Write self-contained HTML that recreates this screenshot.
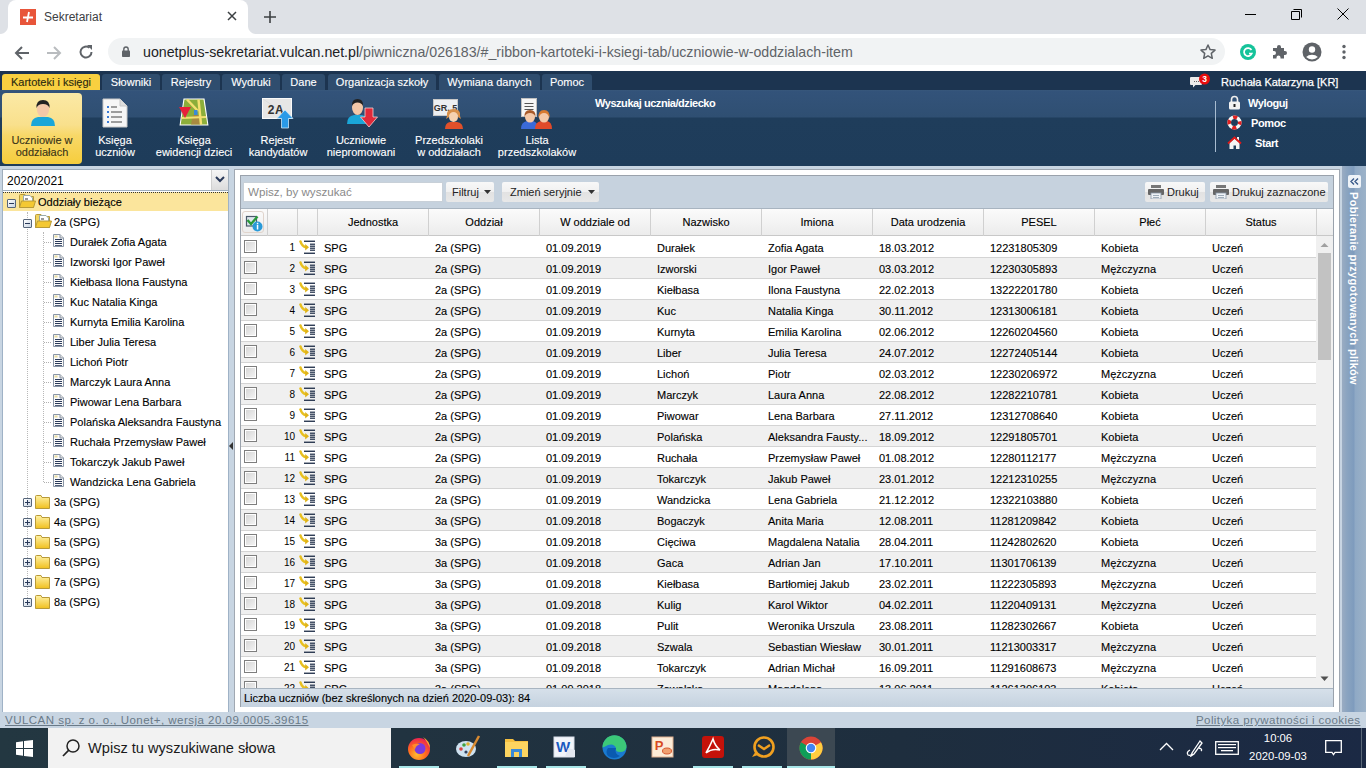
<!DOCTYPE html>
<html><head><meta charset="utf-8"><title>Sekretariat</title>
<style>
*{margin:0;padding:0;box-sizing:border-box}
html,body{width:1366px;height:768px;overflow:hidden;background:#fff;font-family:"Liberation Sans",sans-serif;position:relative}
.abs{position:absolute}
/* chrome */
#tabstrip{position:absolute;left:0;top:0;width:1366px;height:34px;background:#dee1e6}
#tab{position:absolute;left:8px;top:0;width:240px;height:34px;background:#fff;border-radius:8px 8px 0 0}
#tab:before,#tab:after{content:"";position:absolute;bottom:0;width:8px;height:8px;background:radial-gradient(circle at 0 0,transparent 8px,#fff 8px)}
#tab:before{left:-8px;background:radial-gradient(circle at 0 0,#dee1e6 7.5px,#fff 8.5px)}
#tab:after{right:-8px;background:radial-gradient(circle at 100% 0,#dee1e6 7.5px,#fff 8.5px)}
#toolbar{position:absolute;left:0;top:34px;width:1366px;height:37px;background:#fff}
#omni{position:absolute;left:108px;top:38px;width:1117px;height:27px;background:#f1f3f4;border-radius:13.5px}
#url{position:absolute;left:142px;top:44px;font-size:14.2px;color:#5f6368;white-space:nowrap;line-height:16px}
#url b{font-weight:normal;color:#202124}
/* app */
#appbar{position:absolute;left:0;top:71px;width:1366px;height:19px;background:#1c3450}
.atab{position:absolute;top:3px;height:16px;background:#2f4d6e;border-radius:3px 3px 0 0;color:#fff;-webkit-text-stroke:0.12px #fff;font-size:11px;line-height:16px;text-align:center;white-space:nowrap}
.atab.sel{background:#f8d040;color:#2a2a10;-webkit-text-stroke:0.12px #2a2a10}
#ribbon{position:absolute;left:0;top:90px;width:1366px;height:76px;background:linear-gradient(#3a5a7c 0,#33537a 1px,#2f4f72 27px,#1f3d5b 28px,#1e3c5a 75px)}
.rbtn{position:absolute;top:3px;height:71px;text-align:center;color:#fff;-webkit-text-stroke:0.12px #fff;font-size:11px;line-height:12px;white-space:nowrap}
.rbtn .lbl{position:absolute;left:0;right:0;top:41px}
.rbtn.sel{background:linear-gradient(#fbe9a6,#f9e08c 45%,#f8d868 60%,#f6cd3c);border-radius:4px;color:#3a3418;-webkit-text-stroke:0.12px #3a3418}
#content{position:absolute;left:0;top:166px;width:1366px;height:562px;background:#c8d5e2}
#leftp{position:absolute;left:2px;top:169px;width:227px;height:544px;background:#fff;border:1px solid #9fb2c6}
#yearsel{position:absolute;left:2px;top:169px;width:227px;height:22px;background:#fff;border:1px solid #a0aebc;font-size:12px;line-height:22px;padding-left:4px;color:#000}
#yearbtn{position:absolute;left:211px;top:170px;width:17px;height:20px;background:linear-gradient(#f6f6f6,#dcdcdc);border-left:1px solid #d0d0d0}
.trow{position:absolute;height:20px;font-size:11px;line-height:20px;color:#000;-webkit-text-stroke:0.12px #000;white-space:nowrap}
.tchild{position:absolute;left:40px;height:20px;width:180px;font-size:11px;line-height:20px;color:#000;-webkit-text-stroke:0.12px #000;white-space:nowrap}
.tchild .tlabel{position:absolute;left:30px;top:0}
.tchild .hdot{position:absolute;left:4px;top:10px;width:7px;border-top:1px dotted #b0b0b0}
.tfold{position:absolute;left:22px;height:20px;width:180px;font-size:11px;line-height:20px;color:#000;-webkit-text-stroke:0.12px #000;white-space:nowrap}
.tfold .tlabel2{position:absolute;left:32px;top:0}
.plus{position:absolute;left:1px;top:6px;width:9px;height:9px;border:1px solid #56657a;border-radius:1px;background:linear-gradient(135deg,#fff,#c8d4e2)}
.plus:before{content:"";position:absolute;left:1px;top:3px;width:5px;height:1px;background:#2a3a5a}
.plus:after{content:"";position:absolute;left:3px;top:1px;width:1px;height:5px;background:#2a3a5a}
.minus{position:absolute;width:9px;height:9px;border:1px solid #56657a;border-radius:1px;background:linear-gradient(135deg,#fff,#c8d4e2)}
.minus:before{content:"";position:absolute;left:1px;top:3px;width:5px;height:1px;background:#2a3a5a}
/* main panel */
#mainp{position:absolute;left:234px;top:169px;width:106px;height:544px}
#mainouter{position:absolute;left:234px;top:169px;width:1106px;height:544px;background:#fff;border:1px solid #a0a8b2}
#gridbox{position:absolute;left:240px;top:175px;width:1094px;height:532px;background:#c6d2de;border:1px solid #9aa2ac}
#search{position:absolute;left:243px;top:182px;width:200px;height:20px;background:#fff;border:1px solid #c8d0d8;font-size:11.6px;line-height:18px;color:#8a8a8a;padding-left:4px}
.tbtn{position:absolute;top:182px;height:20px;background:linear-gradient(#f8f8f8 0,#f0f0f0 50%,#e2e2e2 51%,#e8e8e8 100%);border-radius:2px;font-size:11px;line-height:21px;color:#222;white-space:nowrap}
#gridhead{position:absolute;left:241px;top:208px;width:1092px;height:28px;background:linear-gradient(#fbfbfb,#ececec);border-top:1px solid #a8b4c0;border-bottom:1px solid #c8c8c8}
.hcell{position:absolute;top:0;height:27px;border-right:1px solid #d0d0d0;font-size:11px;line-height:26px;text-align:center;color:#000;-webkit-text-stroke:0.12px #000}
#gridbody{position:absolute;left:241px;top:236px;width:1092px;height:452px;background:#fff;overflow:hidden}
.row{position:absolute;left:0;width:1075px;height:21px;border-bottom:1px solid #d4d4d4;font-size:11px;line-height:20px;color:#000;-webkit-text-stroke:0.12px #000}
.row .cell{position:absolute;top:1px;white-space:nowrap}
.vsep2{position:absolute;left:56px;top:0;width:1px;height:20px;background:#f2f2f2}
.vsep{display:none}
.row .cb{position:absolute;left:3px;top:3px;width:13px;height:13px;border:1px solid #7e7e7e;box-shadow:inset 0 0 0 1px #fff;background:linear-gradient(135deg,#d4d4d4,#f6f6f6)}
.row .num{position:absolute;left:26px;width:28px;text-align:right;top:1px;font-size:10px;-webkit-text-stroke:0}
.row .ricon{position:absolute;left:58px;top:3px;width:17px;height:15px;line-height:0}
#gridfoot{position:absolute;left:241px;top:688px;width:1092px;height:19px;background:linear-gradient(#d6e0ea,#c5d2df);border-top:1px solid #a8b4c0;font-size:11px;line-height:18px;color:#000;-webkit-text-stroke:0.12px #000;padding-left:3px}
#sidebar{position:absolute;left:1342px;top:166px;width:24px;height:546px;background:linear-gradient(90deg,#9aacc2 0,#8aa4c0 5px,#7e9bbd 12px,#8fa9c5 13px,#9cb2c8 24px)}
#footer{position:absolute;left:0;top:712px;width:1366px;height:16px;background:#c8d5e2;font-size:11.5px;line-height:16px;color:#6a7a88}
#footer span{text-decoration:underline;position:absolute;top:0}
#taskbar{position:absolute;left:0;top:728px;width:1366px;height:40px;background:linear-gradient(90deg,#233741 0,#213340 400px,#1e2e3e 900px,#1b2944 1366px)}
#tsearch{position:absolute;left:48px;top:728px;width:343px;height:40px;background:#f2f2f2;font-size:14.6px;color:#1a1a1a;line-height:40px;padding-left:40px}

.doc{position:absolute;left:13px;top:2px;width:11px;height:13px;line-height:0}
.folder{position:absolute;left:13px;top:3px;width:16px;height:14px;line-height:0}

</style></head><body>
<!-- Chrome -->
<div id="tabstrip"></div>
<div id="tab"></div>
<svg class="abs" style="left:20px;top:9px" width="16" height="16" viewBox="0 0 16 16"><rect width="16" height="16" fill="#e8553a"/><path d="M3 8.5 H13 M9 3 L7 13" stroke="#fff" stroke-width="1.8"/></svg>
<div class="abs" style="left:44px;top:9px;font-size:12px;line-height:16px;color:#3c4043">Sekretariat</div>
<svg class="abs" style="left:226px;top:10px" width="12" height="12" viewBox="0 0 12 12"><path d="M2 2 L10 10 M10 2 L2 10" stroke="#3c4043" stroke-width="1.5"/></svg>
<svg class="abs" style="left:262px;top:9px" width="16" height="16" viewBox="0 0 16 16"><path d="M8 2 V14 M2 8 H14" stroke="#3c4043" stroke-width="1.6"/></svg>
<svg class="abs" style="left:1245px;top:7px" width="12" height="14" viewBox="0 0 12 14"><path d="M0 7.5 H11" stroke="#000" stroke-width="1"/></svg>
<svg class="abs" style="left:1290px;top:8px" width="14" height="14" viewBox="0 0 14 14"><path d="M3.5 1.5 H11.5 V9.5 M1.5 3.5 H9.5 V11.5 H1.5 Z" fill="none" stroke="#000" stroke-width="1"/></svg>
<svg class="abs" style="left:1337px;top:8px" width="12" height="12" viewBox="0 0 12 12"><path d="M0.5 0.5 L11.5 11.5 M11.5 0.5 L0.5 11.5" stroke="#000" stroke-width="1"/></svg>
<div id="toolbar"></div>
<svg class="abs" style="left:12px;top:43px" width="20" height="20" viewBox="0 0 20 20"><path d="M17 10 H4 M10 4 L4 10 L10 16" fill="none" stroke="#5f6368" stroke-width="2"/></svg>
<svg class="abs" style="left:44px;top:43px" width="20" height="20" viewBox="0 0 20 20"><path d="M3 10 H16 M10 4 L16 10 L10 16" fill="none" stroke="#b9bcbf" stroke-width="2"/></svg>
<svg class="abs" style="left:76px;top:42px" width="20" height="20" viewBox="0 0 20 20"><path d="M15.5 10 A5.5 5.5 0 1 1 13.5 5.8" fill="none" stroke="#5f6368" stroke-width="2"/><path d="M11 3 H16 V8 Z" fill="#5f6368"/></svg>
<div id="omni"></div>
<svg class="abs" style="left:122px;top:46px" width="8" height="11" viewBox="0 0 8 11"><rect x="0" y="4.5" width="8" height="6.5" rx="0.8" fill="#5f6368"/><path d="M1.8 5 V3.2 A2.2 2.2 0 0 1 6.2 3.2 V5" fill="none" stroke="#5f6368" stroke-width="1.4"/></svg>
<div id="url" style="left:143px;top:44px"><b>uonetplus-sekretariat.vulcan.net.pl</b>/piwniczna/026183/#_ribbon-kartoteki-i-ksiegi-tab/uczniowie-w-oddzialach-item</div>
<svg class="abs" style="left:1199px;top:43px" width="18" height="18" viewBox="0 0 18 18"><path d="M9 2 L11.1 6.6 L16 7.1 L12.3 10.4 L13.3 15.3 L9 12.8 L4.7 15.3 L5.7 10.4 L2 7.1 L6.9 6.6 Z" fill="none" stroke="#5f6368" stroke-width="1.5" stroke-linejoin="round"/></svg>
<svg class="abs" style="left:1239px;top:43px" width="18" height="18" viewBox="0 0 18 18"><circle cx="9" cy="9" r="8" fill="#15c39a"/><path d="M12.5 7 A4 4 0 1 0 12.8 10.5 L10 10.5" fill="none" stroke="#fff" stroke-width="1.7"/></svg>
<svg class="abs" style="left:1271px;top:43px" width="18" height="18" viewBox="0 0 18 18"><path d="M2 5 H6 V4 A2 2 0 0 1 10 4 V5 H13 V8 H14 A2 2 0 0 1 14 12 H13 V15.5 H9.5 V14.5 A2 2 0 0 0 5.5 14.5 V15.5 H2 V12 H3 A2 2 0 0 0 3 8 H2 Z" fill="#5f6368"/></svg>
<svg class="abs" style="left:1302px;top:42px" width="20" height="20" viewBox="0 0 20 20"><circle cx="10" cy="10" r="9.5" fill="#5f6368"/><circle cx="10" cy="7.5" r="3.2" fill="#fff"/><path d="M4.2 15 A7 5 0 0 1 15.8 15 A8 8 0 0 1 4.2 15Z" fill="#fff"/></svg>
<svg class="abs" style="left:1341px;top:43px" width="6" height="18" viewBox="0 0 6 18"><circle cx="3" cy="3.5" r="1.7" fill="#5f6368"/><circle cx="3" cy="9" r="1.7" fill="#5f6368"/><circle cx="3" cy="14.5" r="1.7" fill="#5f6368"/></svg>

<!-- App bar -->
<div id="appbar"></div>
<div class="atab sel abs" style="left:2px;top:74px;width:98px">Kartoteki i księgi</div>
<div class="atab abs" style="left:102px;top:74px;width:58px">Słowniki</div>
<div class="atab abs" style="left:162px;top:74px;width:58px">Rejestry</div>
<div class="atab abs" style="left:222px;top:74px;width:58px">Wydruki</div>
<div class="atab abs" style="left:282px;top:74px;width:43px">Dane</div>
<div class="atab abs" style="left:328px;top:74px;width:108px">Organizacja szkoły</div>
<div class="atab abs" style="left:439px;top:74px;width:101px">Wymiana danych</div>
<div class="atab abs" style="left:542px;top:74px;width:50px">Pomoc</div>
<svg class="abs" style="left:1188px;top:72px" width="24" height="17" viewBox="0 0 24 17"><path d="M3 5 H13 A1 1 0 0 1 14 6 V12 A1 1 0 0 1 13 13 H7.5 L5 15.5 V13 H3 A1 1 0 0 1 2 12 V6 A1 1 0 0 1 3 5Z" fill="#ececec"/><g fill="#666"><rect x="6" y="9" width="1" height="1"/><rect x="8" y="9" width="1" height="1"/><rect x="10" y="9" width="1" height="1"/></g><circle cx="16.5" cy="7" r="5.5" fill="#e80c0c"/><text x="16.5" y="10" font-size="8.5" font-family="Liberation Sans" font-weight="bold" fill="#fff" text-anchor="middle">3</text></svg>
<div class="abs" style="left:1221px;top:75px;font-size:11px;line-height:14px;color:#fff;-webkit-text-stroke:0.25px #fff;white-space:nowrap">Ruchała Katarzyna [KR]</div>

<!-- Ribbon -->
<div id="ribbon"></div>
<div class="rbtn sel abs" style="left:2px;top:93px;width:80px">
 <svg class="abs" style="left:28px;top:6px" width="26" height="28" viewBox="0 0 26 28"><path d="M1 27 Q1 19 8 18 L18 18 Q25 19 25 27 Z" fill="#1aa6d8"/><ellipse cx="13" cy="10" rx="6.2" ry="8" fill="#f4c8a8"/><path d="M6.5 9 Q6 1 13 1 Q20 1 19.5 9 Q18 5 13 5 Q8 5 6.5 9Z" fill="#222"/></svg>
 <div class="lbl" style="top:41px">Uczniowie w<br>oddziałach</div></div>
<div class="rbtn abs" style="left:86px;top:93px;width:58px">
 <svg class="abs" style="left:16px;top:5px" width="26" height="30" viewBox="0 0 26 30"><path d="M1 1 H18 L25 8 V29 H1 Z" fill="#f6f6f6" stroke="#c8c8c8"/><path d="M18 1 V8 H25" fill="#ddd" stroke="#c8c8c8"/><g fill="#3a7bd5"><rect x="5" y="8" width="2" height="2"/><rect x="5" y="13" width="2" height="2"/><rect x="5" y="18" width="2" height="2"/><rect x="5" y="23" width="2" height="2"/></g><g fill="#444"><rect x="9" y="8.5" width="6" height="1"/><rect x="9" y="13.5" width="11" height="1"/><rect x="9" y="18.5" width="11" height="1"/><rect x="9" y="23.5" width="11" height="1"/></g></svg>
 <div class="lbl" style="top:41px">Księga<br>uczniów</div></div>
<div class="rbtn abs" style="left:152px;top:93px;width:84px">
 <svg class="abs" style="left:27px;top:5px" width="30" height="28" viewBox="0 0 30 28"><path d="M4.5 0.5 H25.5 L29.5 27.5 H0.5 Z" fill="#fff"/><path d="M5.5 1.5 H24.5 L28.3 26.5 H1.7 Z" fill="#8cae3a"/><path d="M14 17 L20 17 L21 26.5 L12 26.5Z" fill="#a88a40"/><path d="M8 1.5 L19 13" stroke="#f4e070" stroke-width="2.5"/><path d="M19.5 1.5 L22 26.5" stroke="#f4e070" stroke-width="2.5"/><path d="M2.5 20 L27 19" stroke="#f4e070" stroke-width="2"/><rect x="15" y="12" width="3.5" height="5" fill="#3a8ad8"/><path d="M0 9 L12 9 L6 20Z" fill="#e8203a"/></svg>
 <div class="lbl" style="top:41px">Księga<br>ewidencji dzieci</div></div>
<div class="rbtn abs" style="left:244px;top:93px;width:68px">
 <svg class="abs" style="left:18px;top:5px" width="32" height="31" viewBox="0 0 32 31"><rect x="0.5" y="0.5" width="29" height="20" fill="#e6e6e6" stroke="#fafafa"/><path d="M1 1 L29 20" stroke="#d0d0d0" stroke-width="0.5"/><text x="14" y="15.5" font-size="12" font-weight="bold" font-family="Liberation Sans" fill="#333" text-anchor="middle" letter-spacing="0.5">2A</text><path d="M23 12 L31 20.5 H26.5 V30 H19.5 V20.5 H15 Z" fill="#2a9ae8" stroke="#c8e4f8" stroke-width="0.8"/></svg>
 <div class="lbl" style="top:41px">Rejestr<br>kandydatów</div></div>
<div class="rbtn abs" style="left:320px;top:93px;width:82px">
 <svg class="abs" style="left:26px;top:5px" width="33" height="31" viewBox="0 0 33 31"><path d="M1 26 Q1 18 8 17 L16 17 Q22 18 22 26 Z" fill="#1aa6d8"/><ellipse cx="11.5" cy="9.5" rx="5.5" ry="7.5" fill="#f4c8a8"/><path d="M6 8 Q5.5 1 11.5 1 Q17.5 1 17 8 Q15.5 4.5 11.5 4.5 Q7.5 4.5 6 8Z" fill="#222"/><path d="M19 10 H27 V19 H31.5 L23 29 L14.5 19 H19 Z" fill="#e02a3a" stroke="#f4d0d0" stroke-width="0.8"/></svg>
 <div class="lbl" style="top:41px">Uczniowie<br>niepromowani</div></div>
<div class="rbtn abs" style="left:410px;top:93px;width:78px">
 <svg class="abs" style="left:23px;top:6px" width="34" height="31" viewBox="0 0 34 31"><rect x="0.5" y="0.5" width="24" height="16" fill="#eceff2" stroke="#c8c8c8"/><text x="12.5" y="12" font-size="9" font-weight="bold" font-family="Liberation Sans" fill="#333" text-anchor="middle">GR. 5</text><path d="M12 30 Q12 24 17 23 H24 Q30 24 30 30Z" fill="#e0502a"/><path d="M14 17 Q13 10 20.5 10 Q28 10 27 17 L28 20 L25 18 Q25 14 20.5 14 Q16 14 16 18 L13 20Z" fill="#d8904a"/><ellipse cx="20.5" cy="18" rx="4.5" ry="5" fill="#f6d2b0"/></svg>
 <div class="lbl" style="top:41px">Przedszkolaki<br>w oddziałach</div></div>
<div class="rbtn abs" style="left:496px;top:93px;width:82px">
 <svg class="abs" style="left:24px;top:5px" width="34" height="32" viewBox="0 0 34 32"><rect x="1.5" y="0.5" width="15" height="18" fill="#f6f6f6" stroke="#c0c0c0"/><g fill="#555"><rect x="4.5" y="5" width="9" height="1"/><rect x="4.5" y="8" width="9" height="1"/><rect x="4.5" y="11" width="9" height="1"/></g><path d="M1 31 Q1 24 7 23 H13 Q18 24 18 31Z" fill="#3a6ad8"/><ellipse cx="10" cy="19" rx="5" ry="5.5" fill="#f4c8a8"/><path d="M4.5 19 Q4 12 10 12 Q16 12 15.5 19 Q14 15 10 15 Q6 15 4.5 19Z" fill="#a85a2a"/><path d="M15 31 Q15 24 21 23 H27 Q32 24 32 31Z" fill="#e04a2a"/><ellipse cx="24" cy="19" rx="5" ry="5.5" fill="#f4c8a8"/><path d="M18.5 20 Q18 12 24 12 Q30 12 29.5 20 Q28 15 24 15 Q20 15 18.5 20Z" fill="#d87a30"/></svg>
 <div class="lbl" style="top:41px">Lista<br>przedszkolaków</div></div>
<div class="abs" style="left:595px;top:97px;font-size:11px;line-height:13px;color:#fff;font-weight:bold;letter-spacing:-0.45px;white-space:nowrap">Wyszukaj ucznia/dziecko</div>
<div class="abs" style="left:1215px;top:101px;width:1px;height:51px;background:#a8bcd0"></div>
<svg class="abs" style="left:1228px;top:95px" width="13" height="15" viewBox="0 0 13 15"><path d="M3.5 7 V4.5 A3 3 0 0 1 9.5 4.5 V7" fill="none" stroke="#eee" stroke-width="1.6"/><rect x="1" y="6.5" width="11" height="8" rx="1.5" fill="#f2f2f2"/><rect x="5.5" y="9" width="2" height="3" fill="#222"/></svg>
<div class="abs" style="left:1248px;top:96px;font-size:11px;line-height:14px;color:#fff;font-weight:bold;letter-spacing:-0.4px">Wyloguj</div>
<svg class="abs" style="left:1227px;top:115px" width="15" height="15" viewBox="0 0 15 15"><circle cx="7.5" cy="7.5" r="5.3" fill="none" stroke="#f6f6f6" stroke-width="3.6"/><circle cx="7.5" cy="7.5" r="5.3" fill="none" stroke="#e02020" stroke-width="3.6" stroke-dasharray="4.16 4.16" stroke-dashoffset="2.08"/></svg>
<div class="abs" style="left:1251px;top:116px;font-size:11px;line-height:14px;color:#fff;font-weight:bold;letter-spacing:-0.4px">Pomoc</div>
<svg class="abs" style="left:1227px;top:135px" width="15" height="15" viewBox="0 0 15 15"><path d="M2.5 8 L7.5 3.5 L12.5 8 V14 H9 V10.5 H6.5 V14 H2.5Z" fill="#f4f4f4"/><rect x="10" y="2" width="2" height="4" fill="#f4f4f4"/><path d="M1 8.5 L7.5 2.5 L14 8.5" fill="none" stroke="#e01818" stroke-width="1.8"/></svg>
<div class="abs" style="left:1255px;top:136px;font-size:11px;line-height:14px;color:#fff;font-weight:bold;letter-spacing:-0.4px">Start</div>

<!-- Content -->
<div id="content"></div>
<div id="leftp"></div>
<div id="yearsel">2020/2021</div>
<div id="yearbtn"><svg class="abs" style="left:3px;top:6px" width="10" height="7" viewBox="0 0 10 7"><path d="M1 1 L5 5 L9 1" fill="none" stroke="#2a3a5a" stroke-width="2"/></svg></div>
<div class="abs" style="left:3px;top:192px;width:225px;height:19px;background:#fbe59c;border-top:1px dotted #333"></div>
<div class="minus" style="left:7px;top:199px"></div>
<div class="folder" style="left:19px;top:194px"><svg width="17" height="14" viewBox="0 0 17 14"><path d="M0.5 1.5 Q0.5 0.5 1.5 0.5 H6 L7 2.5 H14.5 V13.5 H0.5Z" fill="#f2d560" stroke="#b89a38"/><path d="M4.5 1.5 H11 L13.5 4 V8 H4.5Z" fill="#fff" stroke="#9aa"/><rect x="6" y="4.5" width="3" height="1" fill="#333"/><path d="M0.5 13.5 L2.5 7 H16.5 L14.5 13.5Z" fill="#f4c832" stroke="#b89a38"/></svg></div>
<div class="trow" style="left:38px;top:192px">Oddziały bieżące</div>
<div class="abs" style="left:27px;top:212px;height:390px;border-left:1px dotted #b8b8b8"></div>
<div class="abs" style="left:43px;top:232px;height:250px;border-left:1px dotted #b8b8b8"></div>
<div class="minus" style="left:23px;top:219px"></div>
<div class="folder" style="left:35px;top:214px"><svg width="17" height="14" viewBox="0 0 17 14"><path d="M0.5 1.5 Q0.5 0.5 1.5 0.5 H6 L7 2.5 H14.5 V13.5 H0.5Z" fill="#f2d560" stroke="#b89a38"/><path d="M4.5 1.5 H11 L13.5 4 V8 H4.5Z" fill="#fff" stroke="#9aa"/><rect x="6" y="4.5" width="3" height="1" fill="#333"/><path d="M0.5 13.5 L2.5 7 H16.5 L14.5 13.5Z" fill="#f4c832" stroke="#b89a38"/></svg></div>
<div class="trow" style="left:54px;top:212px">2a (SPG)</div>
<div class="tchild" style="top:232px"><span class="hdot"></span><span class="doc"><svg width="11" height="13" viewBox="0 0 11 13"><path d="M0.5 0.5 H7 L10.5 4 V12.5 H0.5Z" fill="#fafafa" stroke="#8a96a6"/><path d="M7 0.5 V4 H10.5" fill="#ddd" stroke="#8a96a6"/><rect x="1.5" y="1.5" width="3" height="2" fill="#e8dca0"/><g fill="#2a3a5a"><rect x="2" y="5" width="7" height="1"/><rect x="2" y="7" width="7" height="1"/><rect x="2" y="9" width="7" height="1"/><rect x="2" y="11" width="7" height="0.8"/></g></svg></span><span class="tlabel">Durałek Zofia Agata</span></div>
<div class="tchild" style="top:252px"><span class="hdot"></span><span class="doc"><svg width="11" height="13" viewBox="0 0 11 13"><path d="M0.5 0.5 H7 L10.5 4 V12.5 H0.5Z" fill="#fafafa" stroke="#8a96a6"/><path d="M7 0.5 V4 H10.5" fill="#ddd" stroke="#8a96a6"/><rect x="1.5" y="1.5" width="3" height="2" fill="#e8dca0"/><g fill="#2a3a5a"><rect x="2" y="5" width="7" height="1"/><rect x="2" y="7" width="7" height="1"/><rect x="2" y="9" width="7" height="1"/><rect x="2" y="11" width="7" height="0.8"/></g></svg></span><span class="tlabel">Izworski Igor Paweł</span></div>
<div class="tchild" style="top:272px"><span class="hdot"></span><span class="doc"><svg width="11" height="13" viewBox="0 0 11 13"><path d="M0.5 0.5 H7 L10.5 4 V12.5 H0.5Z" fill="#fafafa" stroke="#8a96a6"/><path d="M7 0.5 V4 H10.5" fill="#ddd" stroke="#8a96a6"/><rect x="1.5" y="1.5" width="3" height="2" fill="#e8dca0"/><g fill="#2a3a5a"><rect x="2" y="5" width="7" height="1"/><rect x="2" y="7" width="7" height="1"/><rect x="2" y="9" width="7" height="1"/><rect x="2" y="11" width="7" height="0.8"/></g></svg></span><span class="tlabel">Kiełbasa Ilona Faustyna</span></div>
<div class="tchild" style="top:292px"><span class="hdot"></span><span class="doc"><svg width="11" height="13" viewBox="0 0 11 13"><path d="M0.5 0.5 H7 L10.5 4 V12.5 H0.5Z" fill="#fafafa" stroke="#8a96a6"/><path d="M7 0.5 V4 H10.5" fill="#ddd" stroke="#8a96a6"/><rect x="1.5" y="1.5" width="3" height="2" fill="#e8dca0"/><g fill="#2a3a5a"><rect x="2" y="5" width="7" height="1"/><rect x="2" y="7" width="7" height="1"/><rect x="2" y="9" width="7" height="1"/><rect x="2" y="11" width="7" height="0.8"/></g></svg></span><span class="tlabel">Kuc Natalia Kinga</span></div>
<div class="tchild" style="top:312px"><span class="hdot"></span><span class="doc"><svg width="11" height="13" viewBox="0 0 11 13"><path d="M0.5 0.5 H7 L10.5 4 V12.5 H0.5Z" fill="#fafafa" stroke="#8a96a6"/><path d="M7 0.5 V4 H10.5" fill="#ddd" stroke="#8a96a6"/><rect x="1.5" y="1.5" width="3" height="2" fill="#e8dca0"/><g fill="#2a3a5a"><rect x="2" y="5" width="7" height="1"/><rect x="2" y="7" width="7" height="1"/><rect x="2" y="9" width="7" height="1"/><rect x="2" y="11" width="7" height="0.8"/></g></svg></span><span class="tlabel">Kurnyta Emilia Karolina</span></div>
<div class="tchild" style="top:332px"><span class="hdot"></span><span class="doc"><svg width="11" height="13" viewBox="0 0 11 13"><path d="M0.5 0.5 H7 L10.5 4 V12.5 H0.5Z" fill="#fafafa" stroke="#8a96a6"/><path d="M7 0.5 V4 H10.5" fill="#ddd" stroke="#8a96a6"/><rect x="1.5" y="1.5" width="3" height="2" fill="#e8dca0"/><g fill="#2a3a5a"><rect x="2" y="5" width="7" height="1"/><rect x="2" y="7" width="7" height="1"/><rect x="2" y="9" width="7" height="1"/><rect x="2" y="11" width="7" height="0.8"/></g></svg></span><span class="tlabel">Liber Julia Teresa</span></div>
<div class="tchild" style="top:352px"><span class="hdot"></span><span class="doc"><svg width="11" height="13" viewBox="0 0 11 13"><path d="M0.5 0.5 H7 L10.5 4 V12.5 H0.5Z" fill="#fafafa" stroke="#8a96a6"/><path d="M7 0.5 V4 H10.5" fill="#ddd" stroke="#8a96a6"/><rect x="1.5" y="1.5" width="3" height="2" fill="#e8dca0"/><g fill="#2a3a5a"><rect x="2" y="5" width="7" height="1"/><rect x="2" y="7" width="7" height="1"/><rect x="2" y="9" width="7" height="1"/><rect x="2" y="11" width="7" height="0.8"/></g></svg></span><span class="tlabel">Lichoń Piotr</span></div>
<div class="tchild" style="top:372px"><span class="hdot"></span><span class="doc"><svg width="11" height="13" viewBox="0 0 11 13"><path d="M0.5 0.5 H7 L10.5 4 V12.5 H0.5Z" fill="#fafafa" stroke="#8a96a6"/><path d="M7 0.5 V4 H10.5" fill="#ddd" stroke="#8a96a6"/><rect x="1.5" y="1.5" width="3" height="2" fill="#e8dca0"/><g fill="#2a3a5a"><rect x="2" y="5" width="7" height="1"/><rect x="2" y="7" width="7" height="1"/><rect x="2" y="9" width="7" height="1"/><rect x="2" y="11" width="7" height="0.8"/></g></svg></span><span class="tlabel">Marczyk Laura Anna</span></div>
<div class="tchild" style="top:392px"><span class="hdot"></span><span class="doc"><svg width="11" height="13" viewBox="0 0 11 13"><path d="M0.5 0.5 H7 L10.5 4 V12.5 H0.5Z" fill="#fafafa" stroke="#8a96a6"/><path d="M7 0.5 V4 H10.5" fill="#ddd" stroke="#8a96a6"/><rect x="1.5" y="1.5" width="3" height="2" fill="#e8dca0"/><g fill="#2a3a5a"><rect x="2" y="5" width="7" height="1"/><rect x="2" y="7" width="7" height="1"/><rect x="2" y="9" width="7" height="1"/><rect x="2" y="11" width="7" height="0.8"/></g></svg></span><span class="tlabel">Piwowar Lena Barbara</span></div>
<div class="tchild" style="top:412px"><span class="hdot"></span><span class="doc"><svg width="11" height="13" viewBox="0 0 11 13"><path d="M0.5 0.5 H7 L10.5 4 V12.5 H0.5Z" fill="#fafafa" stroke="#8a96a6"/><path d="M7 0.5 V4 H10.5" fill="#ddd" stroke="#8a96a6"/><rect x="1.5" y="1.5" width="3" height="2" fill="#e8dca0"/><g fill="#2a3a5a"><rect x="2" y="5" width="7" height="1"/><rect x="2" y="7" width="7" height="1"/><rect x="2" y="9" width="7" height="1"/><rect x="2" y="11" width="7" height="0.8"/></g></svg></span><span class="tlabel">Polańska Aleksandra Faustyna</span></div>
<div class="tchild" style="top:432px"><span class="hdot"></span><span class="doc"><svg width="11" height="13" viewBox="0 0 11 13"><path d="M0.5 0.5 H7 L10.5 4 V12.5 H0.5Z" fill="#fafafa" stroke="#8a96a6"/><path d="M7 0.5 V4 H10.5" fill="#ddd" stroke="#8a96a6"/><rect x="1.5" y="1.5" width="3" height="2" fill="#e8dca0"/><g fill="#2a3a5a"><rect x="2" y="5" width="7" height="1"/><rect x="2" y="7" width="7" height="1"/><rect x="2" y="9" width="7" height="1"/><rect x="2" y="11" width="7" height="0.8"/></g></svg></span><span class="tlabel">Ruchała Przemysław Paweł</span></div>
<div class="tchild" style="top:452px"><span class="hdot"></span><span class="doc"><svg width="11" height="13" viewBox="0 0 11 13"><path d="M0.5 0.5 H7 L10.5 4 V12.5 H0.5Z" fill="#fafafa" stroke="#8a96a6"/><path d="M7 0.5 V4 H10.5" fill="#ddd" stroke="#8a96a6"/><rect x="1.5" y="1.5" width="3" height="2" fill="#e8dca0"/><g fill="#2a3a5a"><rect x="2" y="5" width="7" height="1"/><rect x="2" y="7" width="7" height="1"/><rect x="2" y="9" width="7" height="1"/><rect x="2" y="11" width="7" height="0.8"/></g></svg></span><span class="tlabel">Tokarczyk Jakub Paweł</span></div>
<div class="tchild" style="top:472px"><span class="hdot"></span><span class="doc"><svg width="11" height="13" viewBox="0 0 11 13"><path d="M0.5 0.5 H7 L10.5 4 V12.5 H0.5Z" fill="#fafafa" stroke="#8a96a6"/><path d="M7 0.5 V4 H10.5" fill="#ddd" stroke="#8a96a6"/><rect x="1.5" y="1.5" width="3" height="2" fill="#e8dca0"/><g fill="#2a3a5a"><rect x="2" y="5" width="7" height="1"/><rect x="2" y="7" width="7" height="1"/><rect x="2" y="9" width="7" height="1"/><rect x="2" y="11" width="7" height="0.8"/></g></svg></span><span class="tlabel">Wandzicka Lena Gabriela</span></div>
<div class="tfold" style="top:492px"><span class="plus"></span><span class="folder"><svg width="16" height="14" viewBox="0 0 16 14"><defs><linearGradient id="fg" x1="0" y1="0" x2="0" y2="1"><stop offset="0" stop-color="#fff2a8"/><stop offset="1" stop-color="#f0c020"/></linearGradient></defs><path d="M0.5 1.5 Q0.5 0.5 1.5 0.5 H6 L7 2.5 H14.5 V13.5 H0.5Z" fill="url(#fg)" stroke="#b89a38"/></svg></span><span class="tlabel2">3a (SPG)</span></div>
<div class="tfold" style="top:512px"><span class="plus"></span><span class="folder"><svg width="16" height="14" viewBox="0 0 16 14"><defs><linearGradient id="fg" x1="0" y1="0" x2="0" y2="1"><stop offset="0" stop-color="#fff2a8"/><stop offset="1" stop-color="#f0c020"/></linearGradient></defs><path d="M0.5 1.5 Q0.5 0.5 1.5 0.5 H6 L7 2.5 H14.5 V13.5 H0.5Z" fill="url(#fg)" stroke="#b89a38"/></svg></span><span class="tlabel2">4a (SPG)</span></div>
<div class="tfold" style="top:532px"><span class="plus"></span><span class="folder"><svg width="16" height="14" viewBox="0 0 16 14"><defs><linearGradient id="fg" x1="0" y1="0" x2="0" y2="1"><stop offset="0" stop-color="#fff2a8"/><stop offset="1" stop-color="#f0c020"/></linearGradient></defs><path d="M0.5 1.5 Q0.5 0.5 1.5 0.5 H6 L7 2.5 H14.5 V13.5 H0.5Z" fill="url(#fg)" stroke="#b89a38"/></svg></span><span class="tlabel2">5a (SPG)</span></div>
<div class="tfold" style="top:552px"><span class="plus"></span><span class="folder"><svg width="16" height="14" viewBox="0 0 16 14"><defs><linearGradient id="fg" x1="0" y1="0" x2="0" y2="1"><stop offset="0" stop-color="#fff2a8"/><stop offset="1" stop-color="#f0c020"/></linearGradient></defs><path d="M0.5 1.5 Q0.5 0.5 1.5 0.5 H6 L7 2.5 H14.5 V13.5 H0.5Z" fill="url(#fg)" stroke="#b89a38"/></svg></span><span class="tlabel2">6a (SPG)</span></div>
<div class="tfold" style="top:572px"><span class="plus"></span><span class="folder"><svg width="16" height="14" viewBox="0 0 16 14"><defs><linearGradient id="fg" x1="0" y1="0" x2="0" y2="1"><stop offset="0" stop-color="#fff2a8"/><stop offset="1" stop-color="#f0c020"/></linearGradient></defs><path d="M0.5 1.5 Q0.5 0.5 1.5 0.5 H6 L7 2.5 H14.5 V13.5 H0.5Z" fill="url(#fg)" stroke="#b89a38"/></svg></span><span class="tlabel2">7a (SPG)</span></div>
<div class="tfold" style="top:592px"><span class="plus"></span><span class="folder"><svg width="16" height="14" viewBox="0 0 16 14"><defs><linearGradient id="fg" x1="0" y1="0" x2="0" y2="1"><stop offset="0" stop-color="#fff2a8"/><stop offset="1" stop-color="#f0c020"/></linearGradient></defs><path d="M0.5 1.5 Q0.5 0.5 1.5 0.5 H6 L7 2.5 H14.5 V13.5 H0.5Z" fill="url(#fg)" stroke="#b89a38"/></svg></span><span class="tlabel2">8a (SPG)</span></div>

<!-- main -->
<div id="mainouter"></div>
<div id="gridbox"></div>
<div id="search">Wpisz, by wyszukać</div>
<div class="tbtn" style="left:446px;width:48px;padding-left:6px">Filtruj<svg class="abs" style="left:38px;top:8px" width="7" height="4" viewBox="0 0 7 4"><path d="M0 0 H7 L3.5 4Z" fill="#333"/></svg></div>
<div class="tbtn" style="left:502px;width:97px;padding-left:8px">Zmień seryjnie<svg class="abs" style="left:86px;top:8px" width="7" height="4" viewBox="0 0 7 4"><path d="M0 0 H7 L3.5 4Z" fill="#333"/></svg></div>
<div class="tbtn" style="left:1145px;width:60px;padding-left:22px">Drukuj<svg class="abs" style="left:3px;top:3px" width="16" height="14" viewBox="0 0 16 14"><rect x="3" y="0" width="10" height="3" fill="#777"/><rect x="0" y="4" width="16" height="6" rx="1" fill="#666"/><rect x="3" y="8" width="10" height="6" fill="#eef2f6" stroke="#8a9aaa" stroke-width="0.8"/><rect x="5" y="10" width="6" height="0.8" fill="#8a9aaa"/><rect x="5" y="12" width="6" height="0.8" fill="#8a9aaa"/></svg></div>
<div class="tbtn" style="left:1210px;width:118px;padding-left:22px">Drukuj zaznaczone<svg class="abs" style="left:3px;top:3px" width="16" height="14" viewBox="0 0 16 14"><rect x="3" y="0" width="10" height="3" fill="#777"/><rect x="0" y="4" width="16" height="6" rx="1" fill="#666"/><rect x="3" y="8" width="10" height="6" fill="#eef2f6" stroke="#8a9aaa" stroke-width="0.8"/><rect x="5" y="10" width="6" height="0.8" fill="#8a9aaa"/><rect x="5" y="12" width="6" height="0.8" fill="#8a9aaa"/></svg></div>
<div id="gridhead">
 <div class="hcell" style="left:-1px;width:28px"><div class="abs" style="left:2px;top:2px;width:22px;height:22px;border:1px solid #e0d4cc;border-radius:3px;background:linear-gradient(#fafafa,#ececec)"><svg class="abs" style="left:2px;top:2px" width="18" height="18" viewBox="0 0 18 18"><rect x="1.5" y="2.5" width="10" height="9.5" fill="#dfe6ee" stroke="#4a5a6a" stroke-width="1.2"/><path d="M2.5 6 L6 10 L12.5 2.5" fill="none" stroke="#2a9a3a" stroke-width="2.4"/><circle cx="12.5" cy="12.5" r="5" fill="#2a9ad8"/><rect x="11.8" y="11" width="1.5" height="4.5" fill="#fff"/><rect x="11.8" y="8.8" width="1.5" height="1.5" fill="#fff"/></svg></div></div>
 <div class="hcell" style="left:27px;width:30px"></div>
 <div class="hcell" style="left:57px;width:20px"></div>
 <div class="hcell" style="left:77px;width:111px">Jednostka</div>
 <div class="hcell" style="left:188px;width:111px">Oddział</div>
 <div class="hcell" style="left:299px;width:111px">W oddziale od</div>
 <div class="hcell" style="left:410px;width:111px">Nazwisko</div>
 <div class="hcell" style="left:521px;width:111px">Imiona</div>
 <div class="hcell" style="left:632px;width:111px">Data urodzenia</div>
 <div class="hcell" style="left:743px;width:111px">PESEL</div>
 <div class="hcell" style="left:854px;width:111px">Płeć</div>
 <div class="hcell" style="left:965px;width:111px">Status</div>
</div>
<div id="gridbody">
<div class="row" style="top:1px;background:#fff"><div class="vsep"></div><div class="cb"></div><div class="num">1</div><div class="ricon"><svg width="17" height="15" viewBox="0 0 17 15"><path d="M1.5 1.5 Q3 6.5 7 7.2" fill="none" stroke="#e8c020" stroke-width="2.6" stroke-linecap="round"/><path d="M6.2 4 L10 7.3 L6.2 10.6Z" fill="#e0b418"/><g fill="#1a2a44"><rect x="5" y="0.6" width="11" height="1.3"/><rect x="11" y="3.6" width="5" height="1.2"/><rect x="11" y="5.6" width="5" height="1.2"/><rect x="11" y="7.6" width="5" height="1.2"/><rect x="11" y="9.6" width="5" height="1.2"/><rect x="5" y="12.6" width="11" height="1.3"/></g></svg></div><div class="cell" style="left:83px">SPG</div><div class="cell" style="left:194px">2a (SPG)</div><div class="cell" style="left:305px">01.09.2019</div><div class="cell" style="left:416px">Durałek</div><div class="cell" style="left:527px">Zofia Agata</div><div class="cell" style="left:638px">18.03.2012</div><div class="cell" style="left:749px">12231805309</div><div class="cell" style="left:860px">Kobieta</div><div class="cell" style="left:971px">Uczeń</div></div>
<div class="row" style="top:22px;background:#f0f0f0"><div class="vsep"></div><div class="cb"></div><div class="num">2</div><div class="ricon"><svg width="17" height="15" viewBox="0 0 17 15"><path d="M1.5 1.5 Q3 6.5 7 7.2" fill="none" stroke="#e8c020" stroke-width="2.6" stroke-linecap="round"/><path d="M6.2 4 L10 7.3 L6.2 10.6Z" fill="#e0b418"/><g fill="#1a2a44"><rect x="5" y="0.6" width="11" height="1.3"/><rect x="11" y="3.6" width="5" height="1.2"/><rect x="11" y="5.6" width="5" height="1.2"/><rect x="11" y="7.6" width="5" height="1.2"/><rect x="11" y="9.6" width="5" height="1.2"/><rect x="5" y="12.6" width="11" height="1.3"/></g></svg></div><div class="cell" style="left:83px">SPG</div><div class="cell" style="left:194px">2a (SPG)</div><div class="cell" style="left:305px">01.09.2019</div><div class="cell" style="left:416px">Izworski</div><div class="cell" style="left:527px">Igor Paweł</div><div class="cell" style="left:638px">03.03.2012</div><div class="cell" style="left:749px">12230305893</div><div class="cell" style="left:860px">Mężczyzna</div><div class="cell" style="left:971px">Uczeń</div></div>
<div class="row" style="top:43px;background:#fff"><div class="vsep"></div><div class="cb"></div><div class="num">3</div><div class="ricon"><svg width="17" height="15" viewBox="0 0 17 15"><path d="M1.5 1.5 Q3 6.5 7 7.2" fill="none" stroke="#e8c020" stroke-width="2.6" stroke-linecap="round"/><path d="M6.2 4 L10 7.3 L6.2 10.6Z" fill="#e0b418"/><g fill="#1a2a44"><rect x="5" y="0.6" width="11" height="1.3"/><rect x="11" y="3.6" width="5" height="1.2"/><rect x="11" y="5.6" width="5" height="1.2"/><rect x="11" y="7.6" width="5" height="1.2"/><rect x="11" y="9.6" width="5" height="1.2"/><rect x="5" y="12.6" width="11" height="1.3"/></g></svg></div><div class="cell" style="left:83px">SPG</div><div class="cell" style="left:194px">2a (SPG)</div><div class="cell" style="left:305px">01.09.2019</div><div class="cell" style="left:416px">Kiełbasa</div><div class="cell" style="left:527px">Ilona Faustyna</div><div class="cell" style="left:638px">22.02.2013</div><div class="cell" style="left:749px">13222201780</div><div class="cell" style="left:860px">Kobieta</div><div class="cell" style="left:971px">Uczeń</div></div>
<div class="row" style="top:64px;background:#f0f0f0"><div class="vsep"></div><div class="cb"></div><div class="num">4</div><div class="ricon"><svg width="17" height="15" viewBox="0 0 17 15"><path d="M1.5 1.5 Q3 6.5 7 7.2" fill="none" stroke="#e8c020" stroke-width="2.6" stroke-linecap="round"/><path d="M6.2 4 L10 7.3 L6.2 10.6Z" fill="#e0b418"/><g fill="#1a2a44"><rect x="5" y="0.6" width="11" height="1.3"/><rect x="11" y="3.6" width="5" height="1.2"/><rect x="11" y="5.6" width="5" height="1.2"/><rect x="11" y="7.6" width="5" height="1.2"/><rect x="11" y="9.6" width="5" height="1.2"/><rect x="5" y="12.6" width="11" height="1.3"/></g></svg></div><div class="cell" style="left:83px">SPG</div><div class="cell" style="left:194px">2a (SPG)</div><div class="cell" style="left:305px">01.09.2019</div><div class="cell" style="left:416px">Kuc</div><div class="cell" style="left:527px">Natalia Kinga</div><div class="cell" style="left:638px">30.11.2012</div><div class="cell" style="left:749px">12313006181</div><div class="cell" style="left:860px">Kobieta</div><div class="cell" style="left:971px">Uczeń</div></div>
<div class="row" style="top:85px;background:#fff"><div class="vsep"></div><div class="cb"></div><div class="num">5</div><div class="ricon"><svg width="17" height="15" viewBox="0 0 17 15"><path d="M1.5 1.5 Q3 6.5 7 7.2" fill="none" stroke="#e8c020" stroke-width="2.6" stroke-linecap="round"/><path d="M6.2 4 L10 7.3 L6.2 10.6Z" fill="#e0b418"/><g fill="#1a2a44"><rect x="5" y="0.6" width="11" height="1.3"/><rect x="11" y="3.6" width="5" height="1.2"/><rect x="11" y="5.6" width="5" height="1.2"/><rect x="11" y="7.6" width="5" height="1.2"/><rect x="11" y="9.6" width="5" height="1.2"/><rect x="5" y="12.6" width="11" height="1.3"/></g></svg></div><div class="cell" style="left:83px">SPG</div><div class="cell" style="left:194px">2a (SPG)</div><div class="cell" style="left:305px">01.09.2019</div><div class="cell" style="left:416px">Kurnyta</div><div class="cell" style="left:527px">Emilia Karolina</div><div class="cell" style="left:638px">02.06.2012</div><div class="cell" style="left:749px">12260204560</div><div class="cell" style="left:860px">Kobieta</div><div class="cell" style="left:971px">Uczeń</div></div>
<div class="row" style="top:106px;background:#f0f0f0"><div class="vsep"></div><div class="cb"></div><div class="num">6</div><div class="ricon"><svg width="17" height="15" viewBox="0 0 17 15"><path d="M1.5 1.5 Q3 6.5 7 7.2" fill="none" stroke="#e8c020" stroke-width="2.6" stroke-linecap="round"/><path d="M6.2 4 L10 7.3 L6.2 10.6Z" fill="#e0b418"/><g fill="#1a2a44"><rect x="5" y="0.6" width="11" height="1.3"/><rect x="11" y="3.6" width="5" height="1.2"/><rect x="11" y="5.6" width="5" height="1.2"/><rect x="11" y="7.6" width="5" height="1.2"/><rect x="11" y="9.6" width="5" height="1.2"/><rect x="5" y="12.6" width="11" height="1.3"/></g></svg></div><div class="cell" style="left:83px">SPG</div><div class="cell" style="left:194px">2a (SPG)</div><div class="cell" style="left:305px">01.09.2019</div><div class="cell" style="left:416px">Liber</div><div class="cell" style="left:527px">Julia Teresa</div><div class="cell" style="left:638px">24.07.2012</div><div class="cell" style="left:749px">12272405144</div><div class="cell" style="left:860px">Kobieta</div><div class="cell" style="left:971px">Uczeń</div></div>
<div class="row" style="top:127px;background:#fff"><div class="vsep"></div><div class="cb"></div><div class="num">7</div><div class="ricon"><svg width="17" height="15" viewBox="0 0 17 15"><path d="M1.5 1.5 Q3 6.5 7 7.2" fill="none" stroke="#e8c020" stroke-width="2.6" stroke-linecap="round"/><path d="M6.2 4 L10 7.3 L6.2 10.6Z" fill="#e0b418"/><g fill="#1a2a44"><rect x="5" y="0.6" width="11" height="1.3"/><rect x="11" y="3.6" width="5" height="1.2"/><rect x="11" y="5.6" width="5" height="1.2"/><rect x="11" y="7.6" width="5" height="1.2"/><rect x="11" y="9.6" width="5" height="1.2"/><rect x="5" y="12.6" width="11" height="1.3"/></g></svg></div><div class="cell" style="left:83px">SPG</div><div class="cell" style="left:194px">2a (SPG)</div><div class="cell" style="left:305px">01.09.2019</div><div class="cell" style="left:416px">Lichoń</div><div class="cell" style="left:527px">Piotr</div><div class="cell" style="left:638px">02.03.2012</div><div class="cell" style="left:749px">12230206972</div><div class="cell" style="left:860px">Mężczyzna</div><div class="cell" style="left:971px">Uczeń</div></div>
<div class="row" style="top:148px;background:#f0f0f0"><div class="vsep"></div><div class="cb"></div><div class="num">8</div><div class="ricon"><svg width="17" height="15" viewBox="0 0 17 15"><path d="M1.5 1.5 Q3 6.5 7 7.2" fill="none" stroke="#e8c020" stroke-width="2.6" stroke-linecap="round"/><path d="M6.2 4 L10 7.3 L6.2 10.6Z" fill="#e0b418"/><g fill="#1a2a44"><rect x="5" y="0.6" width="11" height="1.3"/><rect x="11" y="3.6" width="5" height="1.2"/><rect x="11" y="5.6" width="5" height="1.2"/><rect x="11" y="7.6" width="5" height="1.2"/><rect x="11" y="9.6" width="5" height="1.2"/><rect x="5" y="12.6" width="11" height="1.3"/></g></svg></div><div class="cell" style="left:83px">SPG</div><div class="cell" style="left:194px">2a (SPG)</div><div class="cell" style="left:305px">01.09.2019</div><div class="cell" style="left:416px">Marczyk</div><div class="cell" style="left:527px">Laura Anna</div><div class="cell" style="left:638px">22.08.2012</div><div class="cell" style="left:749px">12282210781</div><div class="cell" style="left:860px">Kobieta</div><div class="cell" style="left:971px">Uczeń</div></div>
<div class="row" style="top:169px;background:#fff"><div class="vsep"></div><div class="cb"></div><div class="num">9</div><div class="ricon"><svg width="17" height="15" viewBox="0 0 17 15"><path d="M1.5 1.5 Q3 6.5 7 7.2" fill="none" stroke="#e8c020" stroke-width="2.6" stroke-linecap="round"/><path d="M6.2 4 L10 7.3 L6.2 10.6Z" fill="#e0b418"/><g fill="#1a2a44"><rect x="5" y="0.6" width="11" height="1.3"/><rect x="11" y="3.6" width="5" height="1.2"/><rect x="11" y="5.6" width="5" height="1.2"/><rect x="11" y="7.6" width="5" height="1.2"/><rect x="11" y="9.6" width="5" height="1.2"/><rect x="5" y="12.6" width="11" height="1.3"/></g></svg></div><div class="cell" style="left:83px">SPG</div><div class="cell" style="left:194px">2a (SPG)</div><div class="cell" style="left:305px">01.09.2019</div><div class="cell" style="left:416px">Piwowar</div><div class="cell" style="left:527px">Lena Barbara</div><div class="cell" style="left:638px">27.11.2012</div><div class="cell" style="left:749px">12312708640</div><div class="cell" style="left:860px">Kobieta</div><div class="cell" style="left:971px">Uczeń</div></div>
<div class="row" style="top:190px;background:#f0f0f0"><div class="vsep"></div><div class="cb"></div><div class="num">10</div><div class="ricon"><svg width="17" height="15" viewBox="0 0 17 15"><path d="M1.5 1.5 Q3 6.5 7 7.2" fill="none" stroke="#e8c020" stroke-width="2.6" stroke-linecap="round"/><path d="M6.2 4 L10 7.3 L6.2 10.6Z" fill="#e0b418"/><g fill="#1a2a44"><rect x="5" y="0.6" width="11" height="1.3"/><rect x="11" y="3.6" width="5" height="1.2"/><rect x="11" y="5.6" width="5" height="1.2"/><rect x="11" y="7.6" width="5" height="1.2"/><rect x="11" y="9.6" width="5" height="1.2"/><rect x="5" y="12.6" width="11" height="1.3"/></g></svg></div><div class="cell" style="left:83px">SPG</div><div class="cell" style="left:194px">2a (SPG)</div><div class="cell" style="left:305px">01.09.2019</div><div class="cell" style="left:416px">Polańska</div><div class="cell" style="left:527px">Aleksandra Fausty...</div><div class="cell" style="left:638px">18.09.2012</div><div class="cell" style="left:749px">12291805701</div><div class="cell" style="left:860px">Kobieta</div><div class="cell" style="left:971px">Uczeń</div></div>
<div class="row" style="top:211px;background:#fff"><div class="vsep"></div><div class="cb"></div><div class="num">11</div><div class="ricon"><svg width="17" height="15" viewBox="0 0 17 15"><path d="M1.5 1.5 Q3 6.5 7 7.2" fill="none" stroke="#e8c020" stroke-width="2.6" stroke-linecap="round"/><path d="M6.2 4 L10 7.3 L6.2 10.6Z" fill="#e0b418"/><g fill="#1a2a44"><rect x="5" y="0.6" width="11" height="1.3"/><rect x="11" y="3.6" width="5" height="1.2"/><rect x="11" y="5.6" width="5" height="1.2"/><rect x="11" y="7.6" width="5" height="1.2"/><rect x="11" y="9.6" width="5" height="1.2"/><rect x="5" y="12.6" width="11" height="1.3"/></g></svg></div><div class="cell" style="left:83px">SPG</div><div class="cell" style="left:194px">2a (SPG)</div><div class="cell" style="left:305px">01.09.2019</div><div class="cell" style="left:416px">Ruchała</div><div class="cell" style="left:527px">Przemysław Paweł</div><div class="cell" style="left:638px">01.08.2012</div><div class="cell" style="left:749px">12280112177</div><div class="cell" style="left:860px">Mężczyzna</div><div class="cell" style="left:971px">Uczeń</div></div>
<div class="row" style="top:232px;background:#f0f0f0"><div class="vsep"></div><div class="cb"></div><div class="num">12</div><div class="ricon"><svg width="17" height="15" viewBox="0 0 17 15"><path d="M1.5 1.5 Q3 6.5 7 7.2" fill="none" stroke="#e8c020" stroke-width="2.6" stroke-linecap="round"/><path d="M6.2 4 L10 7.3 L6.2 10.6Z" fill="#e0b418"/><g fill="#1a2a44"><rect x="5" y="0.6" width="11" height="1.3"/><rect x="11" y="3.6" width="5" height="1.2"/><rect x="11" y="5.6" width="5" height="1.2"/><rect x="11" y="7.6" width="5" height="1.2"/><rect x="11" y="9.6" width="5" height="1.2"/><rect x="5" y="12.6" width="11" height="1.3"/></g></svg></div><div class="cell" style="left:83px">SPG</div><div class="cell" style="left:194px">2a (SPG)</div><div class="cell" style="left:305px">01.09.2019</div><div class="cell" style="left:416px">Tokarczyk</div><div class="cell" style="left:527px">Jakub Paweł</div><div class="cell" style="left:638px">23.01.2012</div><div class="cell" style="left:749px">12212310255</div><div class="cell" style="left:860px">Mężczyzna</div><div class="cell" style="left:971px">Uczeń</div></div>
<div class="row" style="top:253px;background:#fff"><div class="vsep"></div><div class="cb"></div><div class="num">13</div><div class="ricon"><svg width="17" height="15" viewBox="0 0 17 15"><path d="M1.5 1.5 Q3 6.5 7 7.2" fill="none" stroke="#e8c020" stroke-width="2.6" stroke-linecap="round"/><path d="M6.2 4 L10 7.3 L6.2 10.6Z" fill="#e0b418"/><g fill="#1a2a44"><rect x="5" y="0.6" width="11" height="1.3"/><rect x="11" y="3.6" width="5" height="1.2"/><rect x="11" y="5.6" width="5" height="1.2"/><rect x="11" y="7.6" width="5" height="1.2"/><rect x="11" y="9.6" width="5" height="1.2"/><rect x="5" y="12.6" width="11" height="1.3"/></g></svg></div><div class="cell" style="left:83px">SPG</div><div class="cell" style="left:194px">2a (SPG)</div><div class="cell" style="left:305px">01.09.2019</div><div class="cell" style="left:416px">Wandzicka</div><div class="cell" style="left:527px">Lena Gabriela</div><div class="cell" style="left:638px">21.12.2012</div><div class="cell" style="left:749px">12322103880</div><div class="cell" style="left:860px">Kobieta</div><div class="cell" style="left:971px">Uczeń</div></div>
<div class="row" style="top:274px;background:#f0f0f0"><div class="vsep"></div><div class="cb"></div><div class="num">14</div><div class="ricon"><svg width="17" height="15" viewBox="0 0 17 15"><path d="M1.5 1.5 Q3 6.5 7 7.2" fill="none" stroke="#e8c020" stroke-width="2.6" stroke-linecap="round"/><path d="M6.2 4 L10 7.3 L6.2 10.6Z" fill="#e0b418"/><g fill="#1a2a44"><rect x="5" y="0.6" width="11" height="1.3"/><rect x="11" y="3.6" width="5" height="1.2"/><rect x="11" y="5.6" width="5" height="1.2"/><rect x="11" y="7.6" width="5" height="1.2"/><rect x="11" y="9.6" width="5" height="1.2"/><rect x="5" y="12.6" width="11" height="1.3"/></g></svg></div><div class="cell" style="left:83px">SPG</div><div class="cell" style="left:194px">3a (SPG)</div><div class="cell" style="left:305px">01.09.2018</div><div class="cell" style="left:416px">Bogaczyk</div><div class="cell" style="left:527px">Anita Maria</div><div class="cell" style="left:638px">12.08.2011</div><div class="cell" style="left:749px">11281209842</div><div class="cell" style="left:860px">Kobieta</div><div class="cell" style="left:971px">Uczeń</div></div>
<div class="row" style="top:295px;background:#fff"><div class="vsep"></div><div class="cb"></div><div class="num">15</div><div class="ricon"><svg width="17" height="15" viewBox="0 0 17 15"><path d="M1.5 1.5 Q3 6.5 7 7.2" fill="none" stroke="#e8c020" stroke-width="2.6" stroke-linecap="round"/><path d="M6.2 4 L10 7.3 L6.2 10.6Z" fill="#e0b418"/><g fill="#1a2a44"><rect x="5" y="0.6" width="11" height="1.3"/><rect x="11" y="3.6" width="5" height="1.2"/><rect x="11" y="5.6" width="5" height="1.2"/><rect x="11" y="7.6" width="5" height="1.2"/><rect x="11" y="9.6" width="5" height="1.2"/><rect x="5" y="12.6" width="11" height="1.3"/></g></svg></div><div class="cell" style="left:83px">SPG</div><div class="cell" style="left:194px">3a (SPG)</div><div class="cell" style="left:305px">01.09.2018</div><div class="cell" style="left:416px">Cięciwa</div><div class="cell" style="left:527px">Magdalena Natalia</div><div class="cell" style="left:638px">28.04.2011</div><div class="cell" style="left:749px">11242802620</div><div class="cell" style="left:860px">Kobieta</div><div class="cell" style="left:971px">Uczeń</div></div>
<div class="row" style="top:316px;background:#f0f0f0"><div class="vsep"></div><div class="cb"></div><div class="num">16</div><div class="ricon"><svg width="17" height="15" viewBox="0 0 17 15"><path d="M1.5 1.5 Q3 6.5 7 7.2" fill="none" stroke="#e8c020" stroke-width="2.6" stroke-linecap="round"/><path d="M6.2 4 L10 7.3 L6.2 10.6Z" fill="#e0b418"/><g fill="#1a2a44"><rect x="5" y="0.6" width="11" height="1.3"/><rect x="11" y="3.6" width="5" height="1.2"/><rect x="11" y="5.6" width="5" height="1.2"/><rect x="11" y="7.6" width="5" height="1.2"/><rect x="11" y="9.6" width="5" height="1.2"/><rect x="5" y="12.6" width="11" height="1.3"/></g></svg></div><div class="cell" style="left:83px">SPG</div><div class="cell" style="left:194px">3a (SPG)</div><div class="cell" style="left:305px">01.09.2018</div><div class="cell" style="left:416px">Gaca</div><div class="cell" style="left:527px">Adrian Jan</div><div class="cell" style="left:638px">17.10.2011</div><div class="cell" style="left:749px">11301706139</div><div class="cell" style="left:860px">Mężczyzna</div><div class="cell" style="left:971px">Uczeń</div></div>
<div class="row" style="top:337px;background:#fff"><div class="vsep"></div><div class="cb"></div><div class="num">17</div><div class="ricon"><svg width="17" height="15" viewBox="0 0 17 15"><path d="M1.5 1.5 Q3 6.5 7 7.2" fill="none" stroke="#e8c020" stroke-width="2.6" stroke-linecap="round"/><path d="M6.2 4 L10 7.3 L6.2 10.6Z" fill="#e0b418"/><g fill="#1a2a44"><rect x="5" y="0.6" width="11" height="1.3"/><rect x="11" y="3.6" width="5" height="1.2"/><rect x="11" y="5.6" width="5" height="1.2"/><rect x="11" y="7.6" width="5" height="1.2"/><rect x="11" y="9.6" width="5" height="1.2"/><rect x="5" y="12.6" width="11" height="1.3"/></g></svg></div><div class="cell" style="left:83px">SPG</div><div class="cell" style="left:194px">3a (SPG)</div><div class="cell" style="left:305px">01.09.2018</div><div class="cell" style="left:416px">Kiełbasa</div><div class="cell" style="left:527px">Bartłomiej Jakub</div><div class="cell" style="left:638px">23.02.2011</div><div class="cell" style="left:749px">11222305893</div><div class="cell" style="left:860px">Mężczyzna</div><div class="cell" style="left:971px">Uczeń</div></div>
<div class="row" style="top:358px;background:#f0f0f0"><div class="vsep"></div><div class="cb"></div><div class="num">18</div><div class="ricon"><svg width="17" height="15" viewBox="0 0 17 15"><path d="M1.5 1.5 Q3 6.5 7 7.2" fill="none" stroke="#e8c020" stroke-width="2.6" stroke-linecap="round"/><path d="M6.2 4 L10 7.3 L6.2 10.6Z" fill="#e0b418"/><g fill="#1a2a44"><rect x="5" y="0.6" width="11" height="1.3"/><rect x="11" y="3.6" width="5" height="1.2"/><rect x="11" y="5.6" width="5" height="1.2"/><rect x="11" y="7.6" width="5" height="1.2"/><rect x="11" y="9.6" width="5" height="1.2"/><rect x="5" y="12.6" width="11" height="1.3"/></g></svg></div><div class="cell" style="left:83px">SPG</div><div class="cell" style="left:194px">3a (SPG)</div><div class="cell" style="left:305px">01.09.2018</div><div class="cell" style="left:416px">Kulig</div><div class="cell" style="left:527px">Karol Wiktor</div><div class="cell" style="left:638px">04.02.2011</div><div class="cell" style="left:749px">11220409131</div><div class="cell" style="left:860px">Mężczyzna</div><div class="cell" style="left:971px">Uczeń</div></div>
<div class="row" style="top:379px;background:#fff"><div class="vsep"></div><div class="cb"></div><div class="num">19</div><div class="ricon"><svg width="17" height="15" viewBox="0 0 17 15"><path d="M1.5 1.5 Q3 6.5 7 7.2" fill="none" stroke="#e8c020" stroke-width="2.6" stroke-linecap="round"/><path d="M6.2 4 L10 7.3 L6.2 10.6Z" fill="#e0b418"/><g fill="#1a2a44"><rect x="5" y="0.6" width="11" height="1.3"/><rect x="11" y="3.6" width="5" height="1.2"/><rect x="11" y="5.6" width="5" height="1.2"/><rect x="11" y="7.6" width="5" height="1.2"/><rect x="11" y="9.6" width="5" height="1.2"/><rect x="5" y="12.6" width="11" height="1.3"/></g></svg></div><div class="cell" style="left:83px">SPG</div><div class="cell" style="left:194px">3a (SPG)</div><div class="cell" style="left:305px">01.09.2018</div><div class="cell" style="left:416px">Pulit</div><div class="cell" style="left:527px">Weronika Urszula</div><div class="cell" style="left:638px">23.08.2011</div><div class="cell" style="left:749px">11282302667</div><div class="cell" style="left:860px">Kobieta</div><div class="cell" style="left:971px">Uczeń</div></div>
<div class="row" style="top:400px;background:#f0f0f0"><div class="vsep"></div><div class="cb"></div><div class="num">20</div><div class="ricon"><svg width="17" height="15" viewBox="0 0 17 15"><path d="M1.5 1.5 Q3 6.5 7 7.2" fill="none" stroke="#e8c020" stroke-width="2.6" stroke-linecap="round"/><path d="M6.2 4 L10 7.3 L6.2 10.6Z" fill="#e0b418"/><g fill="#1a2a44"><rect x="5" y="0.6" width="11" height="1.3"/><rect x="11" y="3.6" width="5" height="1.2"/><rect x="11" y="5.6" width="5" height="1.2"/><rect x="11" y="7.6" width="5" height="1.2"/><rect x="11" y="9.6" width="5" height="1.2"/><rect x="5" y="12.6" width="11" height="1.3"/></g></svg></div><div class="cell" style="left:83px">SPG</div><div class="cell" style="left:194px">3a (SPG)</div><div class="cell" style="left:305px">01.09.2018</div><div class="cell" style="left:416px">Szwala</div><div class="cell" style="left:527px">Sebastian Wiesław</div><div class="cell" style="left:638px">30.01.2011</div><div class="cell" style="left:749px">11213003317</div><div class="cell" style="left:860px">Mężczyzna</div><div class="cell" style="left:971px">Uczeń</div></div>
<div class="row" style="top:421px;background:#fff"><div class="vsep"></div><div class="cb"></div><div class="num">21</div><div class="ricon"><svg width="17" height="15" viewBox="0 0 17 15"><path d="M1.5 1.5 Q3 6.5 7 7.2" fill="none" stroke="#e8c020" stroke-width="2.6" stroke-linecap="round"/><path d="M6.2 4 L10 7.3 L6.2 10.6Z" fill="#e0b418"/><g fill="#1a2a44"><rect x="5" y="0.6" width="11" height="1.3"/><rect x="11" y="3.6" width="5" height="1.2"/><rect x="11" y="5.6" width="5" height="1.2"/><rect x="11" y="7.6" width="5" height="1.2"/><rect x="11" y="9.6" width="5" height="1.2"/><rect x="5" y="12.6" width="11" height="1.3"/></g></svg></div><div class="cell" style="left:83px">SPG</div><div class="cell" style="left:194px">3a (SPG)</div><div class="cell" style="left:305px">01.09.2018</div><div class="cell" style="left:416px">Tokarczyk</div><div class="cell" style="left:527px">Adrian Michał</div><div class="cell" style="left:638px">16.09.2011</div><div class="cell" style="left:749px">11291608673</div><div class="cell" style="left:860px">Mężczyzna</div><div class="cell" style="left:971px">Uczeń</div></div>
<div class="row" style="top:442px;background:#f0f0f0"><div class="vsep"></div><div class="cb"></div><div class="num">22</div><div class="ricon"><svg width="17" height="15" viewBox="0 0 17 15"><path d="M1.5 1.5 Q3 6.5 7 7.2" fill="none" stroke="#e8c020" stroke-width="2.6" stroke-linecap="round"/><path d="M6.2 4 L10 7.3 L6.2 10.6Z" fill="#e0b418"/><g fill="#1a2a44"><rect x="5" y="0.6" width="11" height="1.3"/><rect x="11" y="3.6" width="5" height="1.2"/><rect x="11" y="5.6" width="5" height="1.2"/><rect x="11" y="7.6" width="5" height="1.2"/><rect x="11" y="9.6" width="5" height="1.2"/><rect x="5" y="12.6" width="11" height="1.3"/></g></svg></div><div class="cell" style="left:83px">SPG</div><div class="cell" style="left:194px">3a (SPG)</div><div class="cell" style="left:305px">01.09.2018</div><div class="cell" style="left:416px">Zawalska</div><div class="cell" style="left:527px">Magdalena</div><div class="cell" style="left:638px">13.06.2011</div><div class="cell" style="left:749px">11261306103</div><div class="cell" style="left:860px">Kobieta</div><div class="cell" style="left:971px">Uczeń</div></div>
<div class="abs" style="left:1075px;top:0;width:17px;height:452px;background:#f0f0f0"></div>
<svg class="abs" style="left:1079px;top:6px" width="9" height="6" viewBox="0 0 9 6"><path d="M0.5 5 L4.5 1 L8.5 5Z" fill="#a0a0a0"/></svg>
<div class="abs" style="left:1077px;top:17px;width:13px;height:107px;background:#c2c2c2"></div>
<svg class="abs" style="left:1079px;top:440px" width="9" height="6" viewBox="0 0 9 6"><path d="M0.5 0.5 L4.5 5 L8.5 0.5Z" fill="#505050"/></svg>
</div>
<div id="gridfoot">Liczba uczniów (bez skreślonych na dzień 2020-09-03): 84</div>
<div class="abs" style="left:229px;top:436px;width:5px;height:8px"><svg width="5" height="8" viewBox="0 0 5 8"><path d="M4 0 L0 4 L4 8Z" fill="#333"/></svg></div>

<!-- sidebar -->
<div id="sidebar"></div>
<div class="abs" style="left:1348px;top:175px;width:13px;height:13px;background:#eef3f8;border-radius:2px"><svg class="abs" style="left:2px;top:3px" width="9" height="7" viewBox="0 0 9 7"><path d="M4 0.5 L1 3.5 L4 6.5 M8 0.5 L5 3.5 L8 6.5" fill="none" stroke="#3a5a8a" stroke-width="1.4"/></svg></div>
<div class="abs" style="left:1344px;top:192px;width:20px;height:200px;"><div style="position:absolute;left:0;top:0;transform-origin:0 0;transform:translate(17px,0) rotate(90deg);font-size:11px;font-weight:bold;color:#fff;white-space:nowrap;line-height:14px;letter-spacing:0.3px">Pobieranie przygotowanych plików</div></div>

<!-- footer -->
<div id="footer"><span style="left:5px;letter-spacing:0.48px">VULCAN sp. z o. o., Uonet+, wersja 20.09.0005.39615</span><span style="left:1196px;letter-spacing:0.41px">Polityka prywatności i cookies</span></div>

<!-- taskbar -->
<div id="taskbar"></div>
<svg class="abs" style="left:16px;top:740px" width="17" height="17" viewBox="0 0 17 17"><path d="M0 2.3 L7 1.3 V8 H0Z M8 1.1 L17 0 V8 H8Z M0 9 H7 V15.7 L0 14.7Z M8 9 H17 V17 L8 15.9Z" fill="#fff"/></svg>
<div id="tsearch">Wpisz tu wyszukiwane słowa</div>
<svg class="abs" style="left:61px;top:738px" width="20" height="20" viewBox="0 0 20 20"><circle cx="12" cy="8" r="6" fill="none" stroke="#222" stroke-width="1.5"/><path d="M7.8 12.2 L2 18" stroke="#222" stroke-width="1.7"/></svg>
<div class="abs" style="left:399px;top:766px;width:40px;height:2px;background:#a8e6e8"></div>
<div class="abs" style="left:497px;top:766px;width:40px;height:2px;background:#a8e6e8"></div>
<div class="abs" style="left:546px;top:766px;width:40px;height:2px;background:#a8e6e8"></div>
<div class="abs" style="left:693px;top:766px;width:40px;height:2px;background:#a8e6e8"></div>
<div class="abs" style="left:742px;top:766px;width:40px;height:2px;background:#a8e6e8"></div>
<div class="abs" style="left:787px;top:728px;width:48px;height:40px;background:#3c4852"></div>
<div class="abs" style="left:787px;top:766px;width:48px;height:2px;background:#a8e6e8"></div>
<svg class="abs" style="left:406px;top:735px" width="26" height="25" viewBox="0 0 26 25"><defs><radialGradient id="ff1" cx="0.4" cy="0.75" r="0.8"><stop offset="0" stop-color="#ffbd2e"/><stop offset="0.5" stop-color="#ff6a1f"/><stop offset="1" stop-color="#e8185a"/></radialGradient></defs><circle cx="13" cy="14" r="11" fill="url(#ff1)"/><path d="M17 2 Q24 6 24 13 Q20 5 17 2Z" fill="#ffa62e"/><circle cx="14" cy="13.5" r="5.5" fill="#7a3adf"/><path d="M6 10 Q10 8 14 9 Q9 11 9 15 Z" fill="#ff8c2e"/></svg>
<svg class="abs" style="left:455px;top:734px" width="26" height="26" viewBox="0 0 26 26"><ellipse cx="11" cy="15" rx="10" ry="8" fill="#cfe2f0"/><circle cx="6" cy="15" r="1.8" fill="#d84040"/><circle cx="9" cy="11" r="1.8" fill="#40a040"/><circle cx="13" cy="10" r="1.8" fill="#e0b030"/><circle cx="11" cy="18" r="1.6" fill="#304060"/><path d="M24 2 L13 22" stroke="#d88a30" stroke-width="2.5"/></svg>
<svg class="abs" style="left:505px;top:737px" width="23" height="20" viewBox="0 0 23 20"><path d="M0 2 H8 L10 4 H23 V20 H0Z" fill="#f5c040"/><rect x="0" y="5" width="23" height="15" fill="#fcd460"/><rect x="6" y="12" width="11" height="8" fill="#3a8ad8"/><rect x="9" y="15" width="5" height="5" fill="#fcd460"/></svg>
<svg class="abs" style="left:553px;top:736px" width="22" height="22" viewBox="0 0 22 22"><rect x="1" y="1" width="20" height="20" fill="#f2f5fa" stroke="#d8dee8"/><text x="10" y="16" font-size="15" font-weight="bold" font-family="Liberation Sans" fill="#1a5ac0" text-anchor="middle">W</text><path d="M15 12 L22 14 V21 H12Z" fill="#e4e8f0"/></svg>
<svg class="abs" style="left:602px;top:735px" width="25" height="25" viewBox="0 0 25 25"><circle cx="12.5" cy="12.5" r="12" fill="#1a7ad0"/><path d="M0.5 12.5 A12 12 0 0 1 24.5 12 Q24 17 18 17 Q13 17 14 13 Q12 8 6 10 Q2 12 0.5 12.5Z" fill="#3cc878"/><path d="M14 13 Q12 19 18 21 Q12 25 6 21 Q3 17 6 13Z" fill="#0a5ab0"/></svg>
<svg class="abs" style="left:651px;top:736px" width="23" height="22" viewBox="0 0 23 22"><rect x="1" y="1" width="21" height="20" fill="#fcecd8" stroke="#e0b090"/><text x="8" y="14" font-size="13" font-weight="bold" font-family="Liberation Sans" fill="#d84a20" text-anchor="middle">P</text><ellipse cx="16" cy="15" rx="4.5" ry="3" fill="#f0a070" stroke="#d85a30"/></svg>
<svg class="abs" style="left:702px;top:736px" width="22" height="22" viewBox="0 0 22 22"><rect x="0" y="0" width="22" height="22" rx="3" fill="#c4120a"/><path d="M4 17 Q8 10 11 3 Q13 10 18 14 Q10 12 4 17Z" fill="none" stroke="#fff" stroke-width="1.6"/></svg>
<svg class="abs" style="left:751px;top:736px" width="24" height="23" viewBox="0 0 24 23"><circle cx="13" cy="11" r="9.5" fill="none" stroke="#f0a020" stroke-width="2.6"/><path d="M7 9 L13 13 L19 9" fill="none" stroke="#f0a020" stroke-width="2.4"/><path d="M1 21 L5 15 L7 19Z" fill="#f0a020"/></svg>
<svg class="abs" style="left:799px;top:736px" width="24" height="24" viewBox="0 0 24 24"><circle cx="12" cy="12" r="11.5" fill="#db4437"/><path d="M12 12 L22 6.2 A11.5 11.5 0 0 1 12 23.5Z" fill="#ffcd40"/><path d="M12 12 L12 23.5 A11.5 11.5 0 0 1 2 6.2Z" fill="#0f9d58"/><circle cx="12" cy="12" r="5.3" fill="#fff"/><circle cx="12" cy="12" r="4.2" fill="#4285f4"/></svg>
<svg class="abs" style="left:1159px;top:742px" width="15" height="9" viewBox="0 0 15 9"><path d="M1 8 L7.5 1.5 L14 8" fill="none" stroke="#fff" stroke-width="1.3"/></svg>
<svg class="abs" style="left:1186px;top:740px" width="18" height="17" viewBox="0 0 18 17"><path d="M14 1 L6 13 L5 16 L8 14 L16 3 Z" fill="none" stroke="#fff" stroke-width="1.3"/><path d="M4 10 Q0 12 2 15 Q4 16 7 14 M13 8 Q17 9 15 11" fill="none" stroke="#fff" stroke-width="1.3"/></svg>
<svg class="abs" style="left:1215px;top:741px" width="24" height="14" viewBox="0 0 24 14"><rect x="0.7" y="0.7" width="22.6" height="12.6" fill="none" stroke="#fff" stroke-width="1.3"/><g fill="#fff"><rect x="3" y="3" width="18" height="1.2"/><rect x="3" y="6" width="18" height="1.2"/><rect x="6" y="9" width="12" height="1.3"/></g></svg>
<div class="abs" style="left:1240px;top:731px;width:76px;text-align:center;color:#fff;font-size:11.3px;line-height:14px;white-space:nowrap">10:06</div><div class="abs" style="left:1240px;top:749px;width:76px;text-align:center;color:#fff;font-size:11.3px;line-height:14px;white-space:nowrap">2020-09-03</div>
<svg class="abs" style="left:1325px;top:740px" width="17" height="16" viewBox="0 0 17 16"><path d="M0.7 0.7 H16.3 V12.3 H10 L8.5 14.5 L7 12.3 H0.7Z" fill="none" stroke="#fff" stroke-width="1.3"/></svg>
<div class="abs" style="left:1361px;top:728px;width:1px;height:40px;background:#5a6878"></div>


</body></html>
